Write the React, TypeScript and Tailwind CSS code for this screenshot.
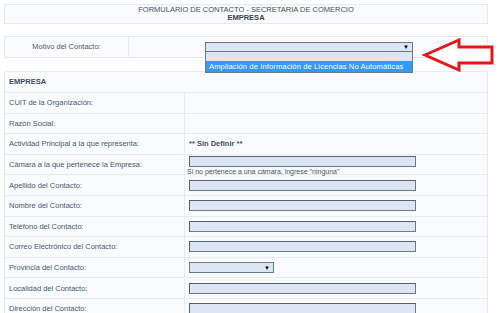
import React from 'react';

const font = { fontFamily: '"Liberation Sans", Arial, sans-serif' };

const rows: { label: string; kind: 'empty' | 'text' | 'input' | 'camara' | 'select' }[] = [
  { label: 'CUIT de la Organización:', kind: 'empty' },
  { label: 'Razón Social:', kind: 'empty' },
  { label: 'Actividad Principal a la que representa:', kind: 'text' },
  { label: 'Cámara a la que pertenece la Empresa:', kind: 'camara' },
  { label: 'Apellido del Contacto:', kind: 'input' },
  { label: 'Nombre del Contacto:', kind: 'input' },
  { label: 'Teléfono del Contacto:', kind: 'input' },
  { label: 'Correo Electrónico del Contacto:', kind: 'input' },
  { label: 'Provincia del Contacto:', kind: 'select' },
  { label: 'Localidad del Contacto:', kind: 'input' },
  { label: 'Dirección del Contacto:', kind: 'input' },
];

const Input = ({ w = 'w-[227px]' }: { w?: string }) => (
  <div className={`${w} h-[11px] bg-[#dce6f3] border border-[#6b7892] border-t-[#556077] border-l-[#556077]`} />
);

const SelectBox = ({ w }: { w: string }) => (
  <div className={`${w} h-[11px] bg-[#dce6f3] border border-[#6b7892] flex items-center justify-end pr-[3px]`}>
    <span className="text-[6px] leading-none text-black">▼</span>
  </div>
);

export default function App() {
  return (
    <div className="w-[500px] h-[313px] bg-white overflow-hidden relative pt-[4px] pl-[4px] text-[#4a5872]" style={font}>
      <div className="w-[484px] h-[20px] border border-[#e4eaf1] bg-[#f9fbfd] flex flex-col items-center justify-center text-[7.5px] leading-[8px] text-[#4a4f5a]">
        <div>FORMULARIO DE CONTACTO - SECRETARIA DE COMERCIO</div>
        <div className="font-bold text-[#3a3f4a]">EMPRESA</div>
      </div>

      <div className="mt-[12px] w-[484px] h-[22px] border border-[#e4eaf1] bg-[#f9fbfd] flex text-[7.5px] text-[#55595f]">
        <div className="w-[124px] border-r border-[#e4eaf1] flex items-center justify-center">Motivo del Contacto:</div>
        <div className="flex-1 flex items-center pl-[76px]">
          <SelectBox w="w-[208px]" />
        </div>
      </div>

      <div className="mt-[13px] w-[484px] border border-[#e4eaf1] bg-[#f9fbfd] text-[7.5px]">
        <div className="h-[21px] flex items-center pl-[4px] font-bold text-[#3d4b66] border-b border-[#e4eaf1]">EMPRESA</div>
        {rows.map((r) => (
          <div key={r.label} className="h-[20.6px] flex border-b border-[#e4eaf1]">
            <div className="w-[180px] shrink-0 border-r border-[#e4eaf1] flex items-center pl-[4px]">{r.label}</div>
            <div className="flex-1 flex flex-col justify-center pl-[4px]">
              {r.kind === 'text' && <span className="font-bold text-[#3d4b66]">** Sin Definir **</span>}
              {r.kind === 'input' && <Input />}
              {r.kind === 'select' && <SelectBox w="w-[85px]" />}
              {r.kind === 'camara' && (
                <div className="mt-[3px]">
                  <Input />
                  <div className="text-[7px] leading-[9px] text-[#4e5560] -ml-[2px]">Si no pertenece a una cámara, ingrese "ninguna"</div>
                </div>
              )}
            </div>
          </div>
        ))}
      </div>

      <div className="absolute left-[205px] top-[51px] w-[208px] border border-[#6b7892] bg-[#dce6f3] text-[7.6px]">
        <div className="h-[9px]" />
        <div className="h-[11px] bg-[#3399ff] text-white flex items-center pl-[3px] tracking-[0.1px]">Ampliación de Información de Licencias No Automáticas</div>
      </div>

      <svg className="absolute left-[420px] top-[36px]" width="78" height="40" viewBox="420 36 78 40">
        <polygon points="425,55 459,40 459,47 492,47 492,63 459,63 459,70" fill="white" stroke="#e8141c" strokeWidth="3" strokeLinejoin="miter" />
      </svg>
    </div>
  );
}
